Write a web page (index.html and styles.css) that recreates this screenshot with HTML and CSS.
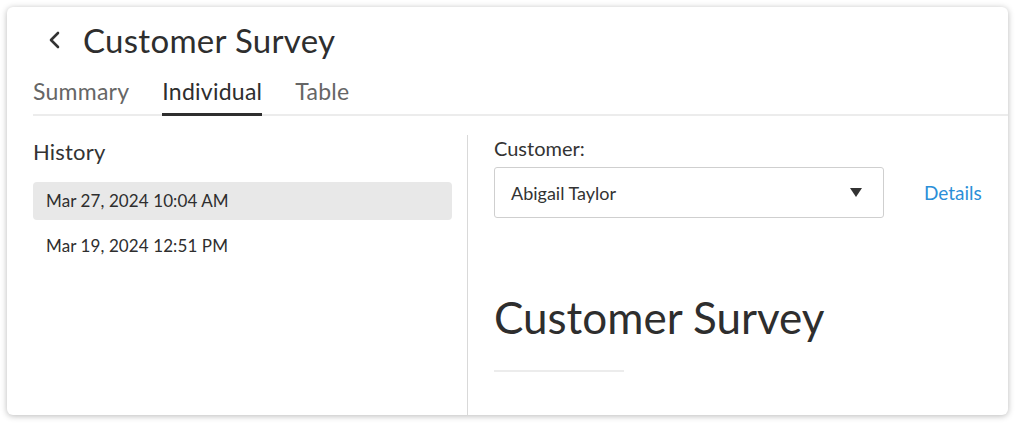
FILE: index.html
```html
<!DOCTYPE html>
<html>
<head>
<meta charset="utf-8">
<link rel="stylesheet" href="styles.css">
</head>
<body>
<div class="card">
  <div class="header">
    <span class="back">
      <svg width="14" height="18" viewBox="0 0 14 18"><path d="M11 2 L4 9 L11 16" fill="none" stroke="#333" stroke-width="2.6" stroke-linecap="round" stroke-linejoin="round"/></svg>
    </span>
    <h1 class="title">Customer Survey</h1>
  </div>
  <div class="tabs">
    <div class="tab">Summary</div>
    <div class="tab active">Individual</div>
    <div class="tab">Table</div>
  </div>
  <div class="body">
    <div class="left">
      <div class="section-title">History</div>
      <div class="row selected">Mar 27, 2024 10:04 AM</div>
      <div class="row">Mar 19, 2024 12:51 PM</div>
    </div>
    <div class="right">
      <div class="label">Customer:</div>
      <div class="select-row">
        <div class="select">
          <span>Abigail Taylor</span>
          <span class="caret"></span>
        </div>
        <a class="details">Details</a>
      </div>
      <div class="survey-title">Customer Survey</div>
      <div class="survey-rule"></div>
    </div>
  </div>
</div>
</body>
</html>
```
FILE: styles.css
```css
html, body {
  margin: 0;
  padding: 0;
  background: #fff;
}
body {
  font-family: Lato, "Noto Sans", sans-serif;
  color: #333;
  padding: 7px 8px 8px 7px;
}
.card {
  width: 1001px;
  height: 408px;
  background: #fff;
  border-radius: 6px;
  box-shadow: 0 1px 6px rgba(0,0,0,0.28);
  overflow: hidden;
  box-sizing: border-box;
  padding-left: 26px;
}
.header {
  display: flex;
  align-items: center;
  height: 67px;
  padding-left: 14px;
  padding-bottom: 2px;
  box-sizing: border-box;
}
.back {
  display: flex;
  width: 36px;
}
.title {
  margin: 0;
  font-weight: 400;
  font-size: 33px;
  color: #2e2e2e;
  letter-spacing: 0.3px;
}
.tabs {
  display: flex;
  gap: 33px;
  border-bottom: 2px solid #ececec;
  height: 40px;
  box-sizing: content-box;
}
.tab {
  font-size: 23px;
  color: #666;
  line-height: 30px;
  padding-top: 2px;
  letter-spacing: 0.25px;
}
.tab.active {
  color: #2e2e2e;
  border-bottom: 3px solid #2e2e2e;
  margin-bottom: -2px;
}
.body {
  display: flex;
  margin-top: 19px;
  height: 281px;
}
.left {
  width: 435px;
  border-right: 1px solid #d9d9d9;
  padding-right: 15px;
  box-sizing: border-box;
}
.section-title {
  font-size: 22px;
  line-height: 28px;
  margin-top: 3px;
  margin-bottom: 16px;
  letter-spacing: 0.2px;
}
.row {
  height: 38px;
  line-height: 38px;
  padding-left: 13px;
  font-size: 17px;
  border-radius: 4px;
  margin-bottom: 7px;
  color: #2e2e2e;
  letter-spacing: 0.1px;
}
.row.selected {
  background: #e8e8e8;
}
.right {
  padding-left: 26px;
}
.label {
  font-size: 20px;
  line-height: 26px;
  margin-bottom: 6px;
}
.select-row {
  display: flex;
  align-items: center;
  gap: 40px;
}
.select {
  width: 390px;
  height: 51px;
  box-sizing: border-box;
  border: 1px solid #cfcfcf;
  border-radius: 3px;
  display: flex;
  align-items: center;
  justify-content: space-between;
  padding: 0 21px 0 16px;
  font-size: 18px;
  color: #333;
}
.caret {
  width: 0;
  height: 0;
  border-left: 6px solid transparent;
  border-right: 6px solid transparent;
  border-top: 9px solid #333;
}
.details {
  color: #2b8fd8;
  font-size: 19px;
  cursor: pointer;
}
.survey-title {
  font-size: 44px;
  margin-top: 72px;
  line-height: 54px;
  color: #2e2e2e;
}
.survey-rule {
  width: 130px;
  height: 2px;
  background: #ececec;
  margin-top: 26px;
}
```
